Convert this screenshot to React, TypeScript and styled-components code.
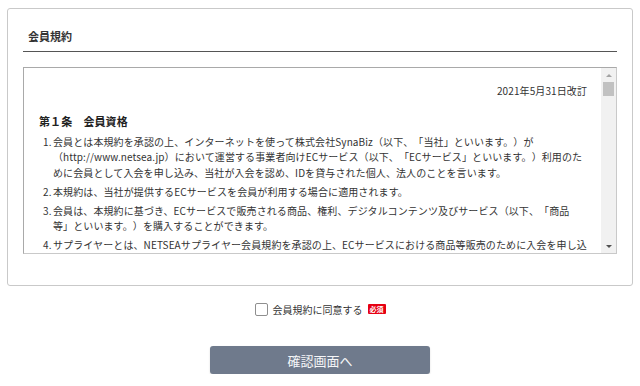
import styled, { createGlobalStyle } from 'styled-components';

const GlobalStyle = createGlobalStyle`
    html, body {
        margin: 0;
        padding: 0;
        background: #ffffff;
    }
    body {
        font-family: "Noto Sans CJK JP", "Noto Sans", sans-serif;
        color: #333333;
        text-spacing-trim: space-all;
    }
    * {
        box-sizing: border-box;
    }
`

const Page = styled.div`
    width: 640px;
    padding: 8px 7px 0;
`

const Card = styled.section`
    border: 1px solid #c9c9c9;
    border-radius: 3px;
    padding: 19px 15px 31px;
`

const Title = styled.h2`
    margin: 0;
    padding: 0 0 7px 5px;
    font-size: 11px;
    line-height: 16px;
    font-weight: 700;
    color: #333;
    border-bottom: 1px solid #555;
`

const TermsBox = styled.div`
    margin-top: 15px;
    height: 187px;
    border: 1px solid #a9a9a9;
    border-right-color: #c9c9c9;
    border-bottom-color: #c9c9c9;
    display: flex;
    overflow: hidden;
`

const Content = styled.div`
    flex: 1;
    overflow: hidden;
    padding: 15px 14px 0 15px;
    font-size: 10px;
    line-height: 15.5px;
    color: #333;
    letter-spacing: 0.1px;
`

const Revised = styled.p`
    margin: 0;
    text-align: right;
`

const Article = styled.h3`
    margin: 13px 0 0;
    font-size: 11px;
    line-height: 18px;
    font-weight: 700;
    color: #222;
`

const Items = styled.ol`
    list-style: none;
    margin: 4px 0 0;
    padding: 0 0 0 4px;
`

const Item = styled.li`
    display: flex;
    & + & {
        margin-top: 3.5px;
    }
`

const Num = styled.span`
    flex: 0 0 10px;
`

const ItemText = styled.span`
    flex: 1;
`

const ScrollBar = styled.div`
    flex: 0 0 15px;
    background: #f1f1f1;
    display: flex;
    flex-direction: column;
    align-items: center;
`

const ArrowButton = styled.div<{ $dir: 'up' | 'down' }>`
    height: 14px;
    width: 100%;
    display: flex;
    align-items: center;
    justify-content: center;
    &::before {
        content: '';
        width: 0;
        height: 0;
        border-left: 3.5px solid transparent;
        border-right: 3.5px solid transparent;
        ${p => p.$dir === 'up'
            ? 'border-bottom: 3.5px solid #a3a3a3;'
            : 'border-top: 3.5px solid #505050;'}
    }
`

const Thumb = styled.div`
    width: 11px;
    height: 14px;
    background: #c1c1c1;
`

const Track = styled.div`
    flex: 1;
`

const AgreeRow = styled.div`
    margin-top: 15px;
    height: 16px;
    display: flex;
    align-items: center;
    justify-content: center;
    gap: 5px;
`

const CheckBox = styled.span`
    width: 13px;
    height: 13px;
    border: 1px solid #8f8f8f;
    border-radius: 2px;
    background: #fff;
`

const AgreeLabel = styled.span`
    font-size: 10px;
    color: #333;
`

const Required = styled.span`
    background: #e60012;
    color: #fff;
    font-size: 7px;
    font-weight: 700;
    line-height: 10px;
    padding: 0 2px;
    border-radius: 1px;
`

const SubmitButton = styled.button`
    display: block;
    margin: 29px auto 0;
    width: 220px;
    height: 28px;
    border: none;
    border-radius: 3px;
    background: #6f7a8c;
    color: #f5f6f8;
    font-family: "Noto Sans CJK JP", "Noto Sans", sans-serif;
    font-size: 13px;
    box-shadow: 0 1px 2px rgba(0, 0, 0, 0.15);
`

const terms = [
    '会員とは本規約を承認の上、インターネットを使って株式会社SynaBiz（以下、「当社」といいます。）が（http://www.netsea.jp）において運営する事業者向けECサービス（以下、「ECサービス」といいます。）利用のために会員として入会を申し込み、当社が入会を認め、IDを貸与された個人、法人のことを言います。',
    '本規約は、当社が提供するECサービスを会員が利用する場合に適用されます。',
    '会員は、本規約に基づき、ECサービスで販売される商品、権利、デジタルコンテンツ及びサービス（以下、「商品等」といいます。）を購入することができます。',
    'サプライヤーとは、NETSEAサプライヤー会員規約を承認の上、ECサービスにおける商品等販売のために入会を申し込み、当社が入会を認め、IDを貸与された個人、法人のことを言います。',
]

export default function App() {
    return (
        <Page>
            <GlobalStyle />
            <Card>
                <Title>会員規約</Title>
                <TermsBox>
                    <Content>
                        <Revised>2021年5月31日改訂</Revised>
                        <Article>第１条　会員資格</Article>
                        <Items>
                            {terms.map((t, i) => (
                                <Item key={i}>
                                    <Num>{i + 1}.</Num>
                                    <ItemText>{t}</ItemText>
                                </Item>
                            ))}
                        </Items>
                    </Content>
                    <ScrollBar>
                        <ArrowButton $dir="up" />
                        <Thumb />
                        <Track />
                        <ArrowButton $dir="down" />
                    </ScrollBar>
                </TermsBox>
            </Card>
            <AgreeRow>
                <CheckBox />
                <AgreeLabel>会員規約に同意する</AgreeLabel>
                <Required>必須</Required>
            </AgreeRow>
            <SubmitButton>確認画面へ</SubmitButton>
        </Page>
    )
}
